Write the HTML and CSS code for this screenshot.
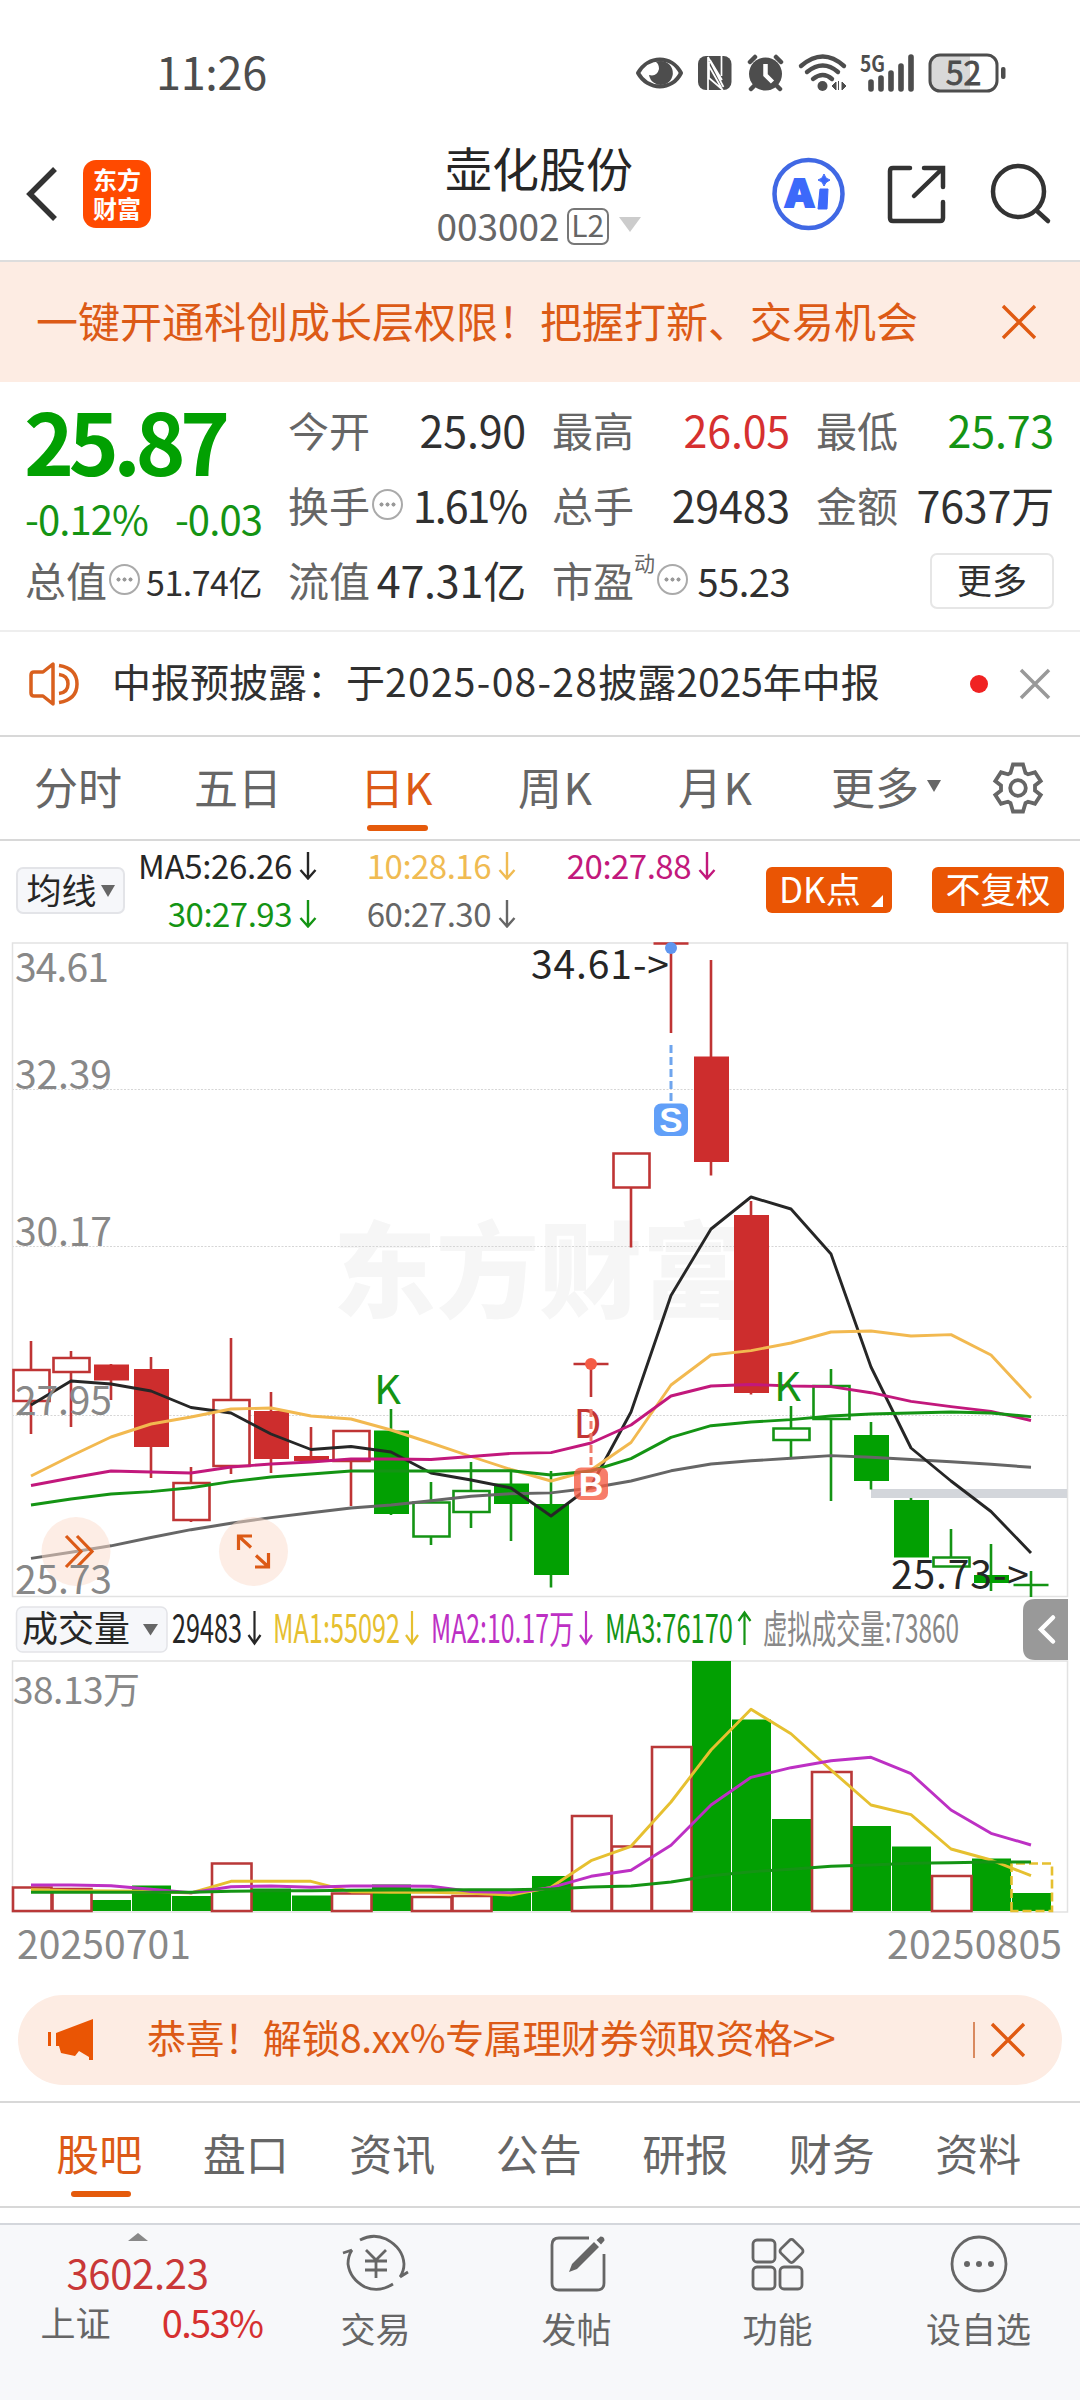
FILE: index.html
```html
<!DOCTYPE html>
<html lang="zh-CN">
<head>
<meta charset="utf-8">
<title>壶化股份 003002</title>
<link rel="stylesheet" href="styles.css">
</head>
<body>
<div class="app">
  <div class="status">
    <span class="time">11:26</span>
    <svg class="status-icons" width="380" height="50" viewBox="630 48 380 50">
      <g fill="none" stroke="#4d4d4d" stroke-width="4">
        <path d="M638 73c10-18 34-18 43 0c-9 18-33 18-43 0z" stroke-linejoin="round"/>
        <path d="M801 66q22-19 43 0M807 72q16-13 31 0M813 79q10-8 19 0" stroke-width="4.4" stroke-linecap="round"/>
        <path d="M750 62l5-5M781 62l-5-5M754 86l-3 3M777 86l3 3" stroke-linecap="round" stroke-width="4.5"/>
        <path d="M871 82v7M881 78v11M891 73v16M901 66v23M911 57v32" stroke-width="5.6" stroke-linecap="round"/>
      </g>
      <path d="M656 62a12 12 0 1 1-7 13q8 2 10-6q0-5-3-7z" fill="#4d4d4d"/>
      <rect x="698" y="56" width="33.500" height="34" rx="8" fill="#4d4d4d"/>
      <path d="M708 57L723.500 87M708 57V90M721.500 56V76M709 62V78L723 90M721.500 88L709 66M722 80L710 60" fill="none" stroke="#fff" stroke-width="1.700"/>
      <circle cx="765.500" cy="74" r="16.500" fill="#4d4d4d"/>
      <path d="M765.500 64v11l7 7" fill="none" stroke="#fff" stroke-width="4.500"/>
      <circle cx="822.500" cy="86" r="5" fill="#4d4d4d"/>
      <path d="M832 86l4-4v8zM838.500 81v9M842 82l4 4l-4 4z" fill="#4d4d4d" stroke="#4d4d4d"/>
      <text x="860" y="72" font-size="22" font-weight="700" fill="#4d4d4d" textLength="25" lengthAdjust="spacingAndGlyphs">5G</text>
      <path d="M939 56h31v34h-31q-8 0-8-8V64q0-8 8-8z" fill="#d8d8d8"/>
      <rect x="930" y="55" width="67" height="36" rx="10" fill="none" stroke="#4d4d4d" stroke-width="3"/>
      <rect x="1001" y="67" width="4.500" height="12" rx="2" fill="#4d4d4d"/>
      <text x="963.500" y="84.500" font-size="32" fill="#4d4d4d" text-anchor="middle" stroke="#4d4d4d" stroke-width=".8">52</text>
    </svg>
  </div>

  <header class="header">
    <div class="head-left">
      <svg width="34" height="56" viewBox="0 0 34 56"><path d="M30 3L5 28l25 25" fill="none" stroke="#333" stroke-width="5.500"/></svg>
      <div class="logo"><span>东方</span><span>财富</span></div>
    </div>
    <div class="head-title">
      <h1>壶化股份</h1>
      <div class="code">003002<span class="l2">L2</span><svg width="24" height="16"><path d="M1 0h22L12 15z" fill="#ccc"/></svg></div>
    </div>
    <svg class="head-icons" width="300" height="80" viewBox="765 154 300 80" fill="none" stroke="#333" stroke-width="4.500">
      <circle cx="808.500" cy="194" r="34" stroke="#4068e4"/>
      <text x="785.500" y="207" font-size="38" font-weight="900" fill="#3c69fa" stroke="#3c69fa" stroke-width="2" textLength="28" lengthAdjust="spacingAndGlyphs">A</text>
      <path d="M820 189l8 0l-1 20h-9z" fill="#3c69fa" stroke="#3c69fa" stroke-width="1"/>
      <path d="M824 174q1 5 6 6q-5 2-6 6q-1-5-6-6q5-1 6-6z" fill="#3c69fa" stroke="#3c69fa" stroke-width="1"/>
      <path d="M910 168h-17q-3 0-3 3v47q0 3 3 3h47q3 0 3-3v-16M924 168h19v19M941 170l-27 26" stroke-linecap="round"/>
      <circle cx="1018.500" cy="191.500" r="25.500"/>
      <path d="M1037 211l11 10" stroke-linecap="round"/>
    </svg>
  </header>

  <div class="promo">
    <span>一键开通科创成长层权限！把握打新、交易机会</span>
    <svg width="36" height="36" viewBox="0 0 36 36"><path d="M2 2l32 32M34 2L2 34" stroke="#e05a12" stroke-width="3.400"/></svg>
  </div>

  <section class="quote">
    <div class="price">
      <strong>25.87</strong>
      <div class="change"><span>-0.12%</span><span>-0.03</span></div>
    </div>
    <div class="cell"><label>今开</label><b>25.90</b></div>
    <div class="cell"><label>最高</label><b class="up">26.05</b></div>
    <div class="cell"><label>最低</label><b class="down">25.73</b></div>
    <div class="cell"><label>换手</label><i class="more-dot"></i><b class="pct">1.61%</b></div>
    <div class="cell"><label>总手</label><b>29483</b></div>
    <div class="cell"><label>金额</label><b>7637万</b></div>
    <div class="cell"><label>总值</label><i class="more-dot"></i><b class="s34">51.74亿</b></div>
    <div class="cell"><label>流值</label><b>47.31亿</b></div>
    <div class="cell"><label>市盈</label><sup>动</sup><i class="more-dot"></i><b class="s37">55.23</b></div>
    <div class="cell end"><button class="more-btn">更多</button></div>
  </section>

  <div class="notice">
    <svg width="52" height="44" viewBox="0 0 52 44" fill="none" stroke="#d9601e" stroke-width="3.500">
      <path d="M24 2v40L14 34H5q-3 0-3-3V13q0-3 3-3h9z" stroke-linejoin="round"/>
      <path d="M30 3.500q18 3 18 18.500t-18 18.500M30 12.500q9 1 9 9.500t-9 9.500"/>
    </svg>
    <span class="notice-text">中报预披露：于<span class="notice-date">2025-08-28</span>披露2025年中报</span>
    <i class="red-dot"></i>
    <svg width="30" height="30" viewBox="0 0 30 30"><path d="M1 1l28 28M29 1L1 29" stroke="#999" stroke-width="3.500"/></svg>
  </div>

  <nav class="periods">
    <span>分时</span><span>五日</span><span class="on">日K</span><span>周K</span><span>月K</span>
    <span class="pmore">更多<svg width="14" height="12"><path d="M0 0h14L7 12z" fill="#666"/></svg></span>
    <svg class="gear" width="56" height="56" viewBox="-28 -28 56 56" fill="none" stroke="#666" stroke-width="3.800">
      <path d="M-5 -23.500H5L7.500 -15L10 -13.700L17 -15.700L22.700 -7L17 -2.500V2.500L22.700 7L17 15.700L10 13.700L7.500 15L5 23.500H-5L-7.500 15L-10 13.700L-17 15.700L-22.700 7L-17 2.500V-2.500L-22.700 -7L-17 -15.700L-10 -13.700L-7.500 -15z"/>
      <circle r="7.800"/>
    </svg>
  </nav>

  <div class="ma-row">
    <div class="pick">均线<svg width="14" height="12"><path d="M0 0h14L7 12z" fill="#666"/></svg></div>
    <div class="ma-grid">
      <span class="ma c5">MA5:26.26<svg class="arr"><use href="#down"/></svg></span>
      <span class="ma c10">10:28.16<svg class="arr"><use href="#down"/></svg></span>
      <span class="ma c20">20:27.88<svg class="arr"><use href="#down"/></svg></span>
      <span class="ma c30">30:27.93<svg class="arr"><use href="#down"/></svg></span>
      <span class="ma c60">60:27.30<svg class="arr"><use href="#down"/></svg></span>
    </div>
    <div class="tag dk">DK点<svg width="12" height="12"><path d="M12 0v12H0z" fill="#fff"/></svg></div>
    <div class="tag fq">不复权</div>
  </div>

  <svg class="kline" width="1080" height="660" viewBox="0 940 1080 660">
    <defs>
      <symbol id="down" viewBox="0 0 18 28"><path d="M9 0v26M1.500 18L9 26.500l7.500-8.500" fill="none" stroke="currentColor" stroke-width="2.400"/></symbol>
    </defs>
    <text class="mark" x="333" y="1310" textLength="412" lengthAdjust="spacingAndGlyphs">东方财富</text>
    <path d="M12 1089.500H1067M12 1246.500H1067M12 1415.500H1067" stroke="#d6d6d6" stroke-width="1" stroke-dasharray="2 1.500"/>
    <path d="M12.500 943V1596.500H1067.500V943z" fill="none" stroke="#e2e2e2" stroke-width="1.500"/>
    <rect x="871" y="1489" width="196" height="9" fill="#d3d6db"/>
    <g class="red">
      <path d="M31 1341V1370M31 1401V1434M71 1351V1358M71 1372V1427M111 1364V1400M151 1357V1478M191 1467V1483M191 1520V1522M231 1338V1400M231 1466V1474M271 1392V1473M311 1427V1461M351 1461V1506M591 1364V1397M573.500 1364H608.500M631 1187V1247.500M671 943V1033M653.500 943.500H688.500M711 960V1175.500M751 1201V1394.500"/>
      <path class="hollow" d="M13.500 1370h36v31h-36zM53.500 1358h36v14h-36zM173.500 1483h36v37h-36zM213.500 1400h36v66h-36zM333.500 1431h36v30h-36zM613.500 1153.500h36v34h-36z"/>
      <path class="solid" d="M94 1364.500h35v16h-35zM134 1369h35v78h-35zM254 1411h35v48h-35zM294 1456h35v5h-35zM694 1056.500h35v105.500h-35zM734 1215h35v178h-35z"/>
    </g>
    <g class="green">
      <path d="M391 1409V1515M431 1482V1502M431 1536V1545M471 1462V1491M471 1512V1528M511 1471V1541M551 1471V1587.500M791 1406V1429M791 1440V1457M831 1369V1386M831 1419V1501M871 1422V1489.500M911 1498V1557M951 1529V1558M991 1544V1591M1031 1571V1597M1013.500 1585H1048.500"/>
      <path class="hollow" d="M413.500 1502.500h36v34h-36zM453.500 1491h36v21h-36zM773.500 1428.500h36v11.500h-36zM813.500 1386h36v33h-36zM933.500 1557.500h36v9h-36z"/>
      <path class="solid" d="M374 1430.500h35v83.500h-35zM494 1483.500h35v20.500h-35zM534 1504h35v71h-35zM854 1435h35v46h-35zM894 1500h35v57.500h-35zM974 1575h35v8h-35z"/>
    </g>
    <circle cx="671" cy="948" r="6" fill="#5f96f0"/>
    <path d="M671 1045V1102" stroke="#6fa5ee" stroke-width="3" stroke-dasharray="8 4"/>
    <rect x="654" y="1103.500" width="34" height="32.500" rx="7" fill="#619ff8"/>
    <text x="671" y="1132" font-size="35" font-weight="700" fill="#fff" text-anchor="middle" class="lat">S</text>
    <text class="d-mark" x="573.500" y="1437.500" textLength="28" lengthAdjust="spacingAndGlyphs">D</text>
    <path d="M591 1409V1466" stroke="#f07a68" stroke-width="3" stroke-dasharray="8 4"/>
    <circle cx="591" cy="1364" r="6" fill="#f55c45"/>
    <g class="line">
      <path stroke="#666" d="M31 1558.400L71 1552.300L111 1545.800L151 1537.500L191 1529.700L231 1523.200L271 1517.600L311 1512.800L351 1508L391 1505L431 1500.700L471 1496.300L511 1493.700L551 1492.900L591 1488L631 1481L671 1470.800L711 1464L751 1460.800L791 1458.200L831 1455.600L871 1457.300L911 1459.500L951 1461.700L991 1464.300L1031 1467.300"/>
      <path stroke="#262626" d="M31 1405L71 1381L111 1384L151 1391L191 1407.500L231 1413L271 1434L311 1449.500L351 1446.500L391 1452L431 1473L471 1480L511 1488L551 1516L591 1486L631 1412L671 1295.500L711 1229L751 1197L791 1209L831 1254L871 1367L911 1448L951 1481L991 1511.500L1031 1553"/>
      <path stroke="#f2b950" d="M31 1476L71 1456L111 1437L151 1424L191 1417L231 1409L271 1408L311 1416L351 1419L391 1430L431 1443L471 1456.500L511 1469.500L551 1481L591 1470L631 1442.500L671 1385L711 1355L751 1350.600L791 1343L831 1332L871 1331L911 1336L951 1334.600L991 1355L1031 1398"/>
      <path stroke="#c2187c" d="M31 1485.500L71 1478L111 1471L151 1472L191 1473L231 1467L271 1464L311 1462L351 1459L391 1459L431 1459.500L471 1456.500L511 1453.400L551 1452.600L591 1443L631 1425L671 1396L711 1386L751 1384.500L791 1386L831 1386.600L871 1392.700L911 1401.400L951 1406.600L991 1411.400L1031 1420.500"/>
      <path stroke="#149414" d="M31 1505L71 1499L111 1494L151 1491.600L191 1487.700L231 1481.600L271 1477L311 1474L351 1471L391 1471L431 1471L471 1470.800L511 1470.800L551 1475L591 1471L631 1458.600L671 1437.400L711 1425.700L751 1422L791 1419.600L831 1416L871 1414L911 1413L951 1412L991 1413L1031 1416.600"/>
    </g>
    <rect x="574" y="1467.500" width="34" height="32.500" rx="7" fill="#f55c45" fill-opacity=".8"/>
    <text x="591" y="1496" font-size="34" font-weight="700" fill="#fff" text-anchor="middle" class="lat">B</text>
    <g fill="#fbdccb" fill-opacity=".5"><circle cx="76" cy="1551.500" r="34.500"/><circle cx="253.500" cy="1551.500" r="34.500"/></g>
    <g fill="none" stroke="#dc5a16" stroke-width="3.200">
      <path d="M66 1536l15 15.500l-15 15.500M77 1536l15 15.500l-15 15.500"/>
      <path d="M238.500 1550v-14h13.500M239 1536.500l12 11M268.500 1553v14h-13.500M268 1566.500l-12-11"/>
    </g>
    <g class="axis">
      <text x="15" y="981.500" textLength="94">34.61</text>
      <text x="15" y="1089" textLength="97">32.39</text>
      <text x="15" y="1246" textLength="97">30.17</text>
      <text x="15" y="1414.500" textLength="97">27.95</text>
      <text x="15" y="1594" textLength="97">25.73</text>
    </g>
    <text class="k-mark" x="374" y="1403.500" textLength="27" lengthAdjust="spacingAndGlyphs">K</text>
    <text class="k-mark" x="774" y="1400.500" textLength="27" lengthAdjust="spacingAndGlyphs">K</text>
    <text class="ext" x="531" y="979" textLength="138">34.61-&gt;</text>
    <text class="ext" x="891" y="1589" textLength="138">25.73-&gt;</text>
  </svg>

  <svg class="vol-head" width="1080" height="60" viewBox="0 1600 1080 60">
    <rect x="16.500" y="1607" width="150.500" height="45" rx="6" fill="#f6f7fa" stroke="#e3e4e8" stroke-width="1.500"/>
    <text x="22" y="1641.500" font-size="36" fill="#262626" textLength="108">成交量</text>
    <path d="M143 1624h15l-7.500 11.500z" fill="#666"/>
    <g class="cond">
      <text x="172" y="1643" fill="#262626" textLength="70" lengthAdjust="spacingAndGlyphs">29483</text>
      <text x="273" y="1643" fill="#e6c030" textLength="127" lengthAdjust="spacingAndGlyphs">MA1:55092</text>
      <text x="431" y="1643" fill="#bd30c4" textLength="143" lengthAdjust="spacingAndGlyphs">MA2:10.17万</text>
      <text x="605" y="1643" fill="#149414" textLength="128" lengthAdjust="spacingAndGlyphs">MA3:76170</text>
      <text x="763" y="1643" fill="#888" textLength="196" lengthAdjust="spacingAndGlyphs">虚拟成交量:73860</text>
    </g>
    <g fill="none" stroke-width="2.200">
      <path stroke="#262626" d="M254.500 1611v32M248.500 1635l6 8.500l6-8.500"/>
      <path stroke="#e6c030" d="M412 1611v32M406 1635l6 8.500l6-8.500"/>
      <path stroke="#bd30c4" d="M586 1611v32M580 1635l6 8.500l6-8.500"/>
      <path stroke="#149414" d="M744.500 1645v-32M738.500 1621l6-8.500l6 8.500"/>
    </g>
    <path d="M1068 1599v61h-33q-12 0-12-12v-37q0-12 12-12z" fill="#999"/>
    <path d="M1053 1617.500l-12 12l12 12" fill="none" stroke="#fff" stroke-width="4.500" stroke-linecap="round"/>
  </svg>

  <svg class="volume" width="1080" height="330" viewBox="0 1660 1080 330">
    <path d="M12.500 1661V1912H1067.500V1661z" fill="none" stroke="#e2e2e2" stroke-width="1.500"/>
    <text class="axis38" x="13" y="1704" textLength="127">38.13万</text>
    <path fill="#02a002" d="M92 1900h39v11h-39zM132 1885.500h39v25.500h-39zM172 1896h39v15h-39zM252 1888.500h39v22.500h-39zM292 1895.500h39v15.500h-39zM372 1884.500h39v26.500h-39zM492 1893h39v18h-39zM532 1876h39v35h-39zM692 1661h39v250h-39zM732 1719.500h39v191.500h-39zM772 1819h39v92h-39zM852 1826h39v85h-39zM892 1846.500h39v64.500h-39zM972 1858.500h39v52.500h-39zM1012 1893h39v18h-39z"/>
    <path fill="none" stroke="#b93838" stroke-width="2.600" d="M13 1887.500h38.500v23.500h-38.500zM52.500 1889h39v22h-39zM212 1863.500h39.500v47.500h-39.500zM332 1893.500h39.500v17.500h-39.500zM412 1897h39.500v14h-39.500zM452.500 1896h39v15h-39zM572 1816h39.500v95h-39.500zM612 1846.500h39.500v64.500h-39.500zM652 1747h39.500v164h-39.500zM812 1772h39.500v139h-39.500zM932 1876h39.500v35h-39.500z"/>
    <path fill="none" stroke="#e6c030" stroke-width="2.600" stroke-dasharray="9 4" d="M1011.500 1911V1863.500H1052V1911z"/>
    <g class="line">
      <path stroke="#e6c030" d="M31 1889.700L71 1890.700L111 1891L151 1891.300L191 1893L231 1881.300L271 1881.300L311 1881.300L351 1891.700L391 1892.300L431 1892.300L471 1893.300L511 1895L551 1887.300L591 1860.700L631 1846.300L671 1802L711 1750L751 1709.300L791 1733.700L831 1770L871 1805L911 1814.700L951 1849L991 1860L1031 1875.700"/>
      <path stroke="#bd30c4" d="M31 1885L71 1885L111 1885.700L151 1889.300L191 1892.700L231 1886.700L271 1886L311 1887.300L351 1886L391 1886L431 1886.300L471 1891.500L511 1892.700L551 1887.700L591 1876.300L631 1870.300L671 1845.300L711 1805L751 1777.300L791 1767.700L831 1760.700L871 1757.300L911 1773.700L951 1810L991 1833.300L1031 1845"/>
      <path stroke="#149414" d="M31 1892.300H191L231 1891.300L271 1890.700H311L351 1890.300L391 1890H431L471 1889.700H511L551 1889L591 1887L631 1886L671 1882L711 1875.700L751 1871.700L791 1869.300L831 1866.300L871 1865L911 1863.300L951 1862.700L991 1862H1031"/>
    </g>
    <text class="date" x="17" y="1959" textLength="174">20250701</text>
    <text class="date" x="887" y="1959" textLength="175">20250805</text>
  </svg>

  <div class="coupon">
    <svg width="50" height="44" viewBox="0 0 50 44" fill="#ea5504"><path d="M46 1v41h-4v-3L32 33l-4 5l-14-3l-2-7H9V15zM1 14h3v14H1z"/></svg>
    <span class="coupon-text">恭喜！解锁8.xx%专属理财券领取资格&gt;&gt;</span>
    <i class="bar"></i>
    <svg width="36" height="36" viewBox="0 0 36 36"><path d="M2 2l32 32M34 2L2 34" stroke="#e05a12" stroke-width="3.400"/></svg>
  </div>

  <nav class="sections">
    <span class="on">股吧</span><span>盘口</span><span>资讯</span><span>公告</span><span>研报</span><span>财务</span><span>资料</span>
  </nav>

  <footer class="dock">
    <div class="index">
      <svg width="20" height="8"><path d="M10 0l10 8H0z" fill="#888"/></svg>
      <b>3602.23</b>
      <div class="index-row"><span>上证</span><em>0.53%</em></div>
    </div>
    <div class="item">
      <svg width="66" height="62" viewBox="0 0 66 62" fill="none" stroke="#666" stroke-width="2.800">
        <path d="M17 8Q30 1 43 7Q60 16 61 32Q61 39 57 45M57 45l8-5M50 52Q36 61 22 55Q7 47 5 32Q5 24 9 18M0 21l9-3"/>
        <path d="M23 18l10 10l10-10M33 28v18M22 29h22M22 38h22"/>
      </svg><span>交易</span>
    </div>
    <div class="item">
      <svg width="66" height="62" viewBox="0 0 66 62" fill="none" stroke="#666" stroke-width="2.800">
        <path d="M45 6H15q-7 0-7 7v38q0 7 7 7h38q7 0 7-7V22"/>
        <path d="M25 40l3-8l22-22l5 5l-22 22zM52.500 8l4-3.500q4 0 4 4l-3.500 4z" fill="#666" stroke="none"/>
      </svg><span>发帖</span>
    </div>
    <div class="item">
      <svg width="66" height="62" viewBox="0 0 66 62" fill="none" stroke="#666" stroke-width="2.800">
        <rect x="8" y="8" width="22" height="22" rx="4"/><rect x="8" y="35" width="22" height="22" rx="4"/><rect x="35" y="35" width="22" height="22" rx="4"/>
        <rect x="37.500" y="10" width="18" height="18" rx="3" transform="rotate(45 46.500 19)"/>
      </svg><span>功能</span>
    </div>
    <div class="item">
      <svg width="66" height="62" viewBox="0 0 66 62"><circle cx="33" cy="32" r="27" fill="none" stroke="#666" stroke-width="2.800"/><g fill="#666"><circle cx="21" cy="32" r="3"/><circle cx="33" cy="32" r="3"/><circle cx="45" cy="32" r="3"/></g></svg><span>设自选</span>
    </div>
  </footer>
</div>
</body>
</html>
```
FILE: styles.css
```css
* { box-sizing: border-box; }
body {
  margin: 0;
  width: 1080px;
  background: #fff;
  color: #262626;
  font-family: "Noto Sans CJK SC", "Noto Sans", sans-serif;
  line-height: 1;
}
svg { display: block; flex: none; overflow: visible; }
.app { width: 1080px; height: 2400px; display: flex; flex-direction: column; overflow: hidden; background: #fff; }
.app > * { flex: none; }
span, b, label, em, strong { white-space: nowrap; }

.status { height: 146px; display: flex; justify-content: space-between; align-items: flex-start; padding: 48px 70px 0 156px; }
.time { font-size: 45px; line-height: 46px; color: #4d4d4d; letter-spacing: -.3px; }

.header { height: 116px; display: flex; justify-content: space-between; padding: 0 15px 0 25px; border-bottom: 2px solid #ddd; }
.head-left { display: flex; align-items: center; gap: 24px; height: 96px; }
.logo { width: 68px; height: 68px; border-radius: 13px; background: #ff4a00; color: #fff; display: flex; flex-direction: column; align-items: center; justify-content: center; font-size: 24px; font-weight: 700; line-height: 29px; padding-bottom: 3px; }
.head-title { display: flex; flex-direction: column; align-items: center; margin-left: 162px; }
h1 { margin: 0; font-size: 47px; font-weight: 400; line-height: 42px; }
.code { display: flex; align-items: center; font-size: 37px; line-height: 38px; color: #666; margin-top: 17px; }
.l2 { border: 2px solid #777; border-radius: 7px; font-size: 30px; line-height: 28px; height: 37px; width: 42px; text-align: center; margin: 3px 9px 0 7px; }
.head-icons { margin-top: 8px; }

.promo { height: 120px; background: #fdece3; display: flex; align-items: center; justify-content: space-between; padding: 0 43px 0 36px; color: #dc5a16; font-size: 42px; }
.promo span { margin-top: -4px; }

.quote { height: 248px; padding: 10px 24px 0 25px; display: grid; grid-template-columns: 237px repeat(3, 238px); grid-template-rows: repeat(3, 75px); column-gap: 26px; }
.price { grid-row: 1 / 3; color: #02a002; display: flex; flex-direction: column; }
.price strong { font-size: 85px; font-weight: 700; line-height: 90px; letter-spacing: -5.500px; margin: 2px 0 0 -1px; }
.change { display: flex; justify-content: space-between; font-size: 40px; line-height: 44px; margin-top: 12px; color: #149414; letter-spacing: -.9px; }
.cell { display: flex; align-items: center; font-size: 43px; }
.cell label { font-size: 41px; color: #666; }
.cell b { margin-left: auto; font-weight: 400; color: #303030; letter-spacing: -.2px; }
.cell .up { color: #d63030; }
.cell .down { color: #149414; }
.cell .pct { letter-spacing: -2px; }
.cell .s34 { font-size: 34px; margin-top: 4px; letter-spacing: -.5px; }
.cell .s37 { font-size: 38px; margin-top: 3px; letter-spacing: -.5px; }
.cell sup { font-size: 21px; color: #666; align-self: flex-start; margin-top: 10px; }
.cell.end { justify-content: flex-end; }
.more-dot { width: 31px; height: 31px; margin-left: 2px; border: 2.500px solid #aaa; border-radius: 50%; background: radial-gradient(circle, #999 1.800px, transparent 2.300px) 50% 50% / 7px 100% no-repeat, radial-gradient(circle, #999 1.800px, transparent 2.300px) 20% 50% / 7px 100% no-repeat, radial-gradient(circle, #999 1.800px, transparent 2.300px) 80% 50% / 7px 100% no-repeat; }
.more-btn { width: 124px; height: 56px; border: 2px solid #e6e6e6; border-radius: 7px; background: #fff; font: 35px/44px "Noto Sans CJK SC", sans-serif; color: #303030; padding: 0 0 4px; margin-top: 2px; }

.notice { height: 107px; border-top: 2px solid #eee; border-bottom: 2px solid #d8d8d8; display: flex; align-items: center; padding: 0 30px 0 29px; }
.notice-text { font-size: 39px; color: #303030; margin: -6px 0 0 31px; }
.notice-date { letter-spacing: 1.300px; }
.red-dot { width: 18px; height: 18px; border-radius: 50%; background: #f02222; margin: 0 32px 0 auto; }

.periods { height: 104px; border-bottom: 2px solid #d8d8d8; display: grid; grid-template-columns: 160px 161px 163px 158px 162px 159px 1fr; padding-bottom: 4px; color: #666; font-size: 44px; align-items: center; justify-items: start; padding-left: 34px; }
.periods span { position: relative; line-height: 60px; }
.periods .on { color: #dc5a16; margin-left: 5px; }
.periods .on::after { content: ""; position: absolute; left: 7px; bottom: -15px; width: 61px; height: 6px; border-radius: 3px; background: #e55a0b; }
.periods span:nth-child(4) { letter-spacing: 1.500px; }
.periods span:nth-child(5) { letter-spacing: 1.500px; margin-left: 2px; }
.pmore { display: flex; align-items: center; gap: 8px; margin-left: -7px; }
.gear { margin: 3px 0 0 -7px; }

.ma-row { height: 99px; display: flex; align-items: flex-start; padding-left: 16px; }
.pick { width: 109px; height: 47px; margin-top: 26px; border: 2px solid #e3e4e8; border-radius: 7px; background: #f6f7fa; display: flex; align-items: center; justify-content: center; gap: 4px; font-size: 35px; line-height: 38px; padding-bottom: 4px; }
.pick svg { margin-top: 4px; }
.ma-grid { width: 593px; height: 99px; display: grid; grid-template-columns: 192px 199px 200px; grid-template-rows: 48px 48px; margin-right: 48px; font-size: 33px; letter-spacing: -.5px; }
.ma { display: flex; align-items: center; justify-content: flex-end; gap: 7px; }
.arr { width: 18px; height: 28px; margin-top: 2px; }
.c5 { color: #262626; letter-spacing: -.3px; }
.c10 { color: #f0bb52; }
.c20 { color: #c2187c; }
.c30 { color: #149414; }
.c60 { color: #666; }
.tag { height: 46px; margin-top: 26px; border-radius: 6px; background: #ea5504; color: #fff; font-size: 35px; line-height: 42px; display: flex; }
.dk { width: 126px; padding-left: 13px; align-items: flex-start; }
.dk svg { margin: 28px 0 0 10px; }
.fq { width: 132px; margin-left: 40px; justify-content: center; }

.mark { font-size: 104px; font-weight: 900; fill: #f6f6f6; }
.red path, .green path { fill: none; stroke-width: 2.600; }
.red path { stroke: #bf3434; }
.green path { stroke: #149414; }
.red .hollow, .green .hollow { fill: #fff; }
.red .solid { fill: #cd2d2d; stroke: none; }
.green .solid { fill: #02a002; stroke: none; }
.line path { fill: none; stroke-width: 2.900; stroke-linejoin: round; }
.lat { font-family: "Liberation Sans", Arial, sans-serif; }
.axis text { font-size: 39px; fill: #888; }
.axis38 { font-size: 37px; fill: #888; }
.date { font-size: 39px; fill: #888; }
.k-mark { font-size: 39px; fill: #149414; }
.d-mark { font-size: 39px; fill: #c23535; }
.ext { font-size: 39px; fill: #262626; }
.cond text { font-size: 39px; }

.coupon { margin: 5px 18px 0; height: 90px; border-radius: 45px; background: #fdece3; display: flex; align-items: center; padding: 0 36px 0 29px; color: #dc5a16; }
.coupon-text { font-size: 39px; margin: -7px auto 0 50px; letter-spacing: -.4px; }
.bar { width: 2px; height: 36px; background: #d98a60; margin-right: 15px; }

.sections { height: 107px; margin-top: 16px; border-top: 2px solid #d8d8d8; border-bottom: 2px solid #d8d8d8; display: grid; grid-template-columns: repeat(7, 146.500px); padding: 0 26px 5px; align-items: center; justify-items: center; color: #666; font-size: 43px; }
.sections span { position: relative; line-height: 60px; }
.sections .on { color: #dc5a16; }
.sections .on::after { content: ""; position: absolute; left: 15px; bottom: -15px; width: 60px; height: 6px; border-radius: 3px; background: #e55a0b; }

.dock { height: 177px; margin-top: 15px; border-top: 2px solid #d4d7dc; background: #f7f8fa; display: grid; grid-template-columns: 275px repeat(4, 201px); }
.index { display: flex; flex-direction: column; align-items: center; padding-top: 8px; color: #c93838; }
.index b { font-size: 40px; font-weight: 400; line-height: 44px; margin-top: 9px; letter-spacing: -.3px; }
.index-row { display: flex; justify-content: space-between; width: 222px; margin: 7px 0 0 28px; }
.index-row span { font-size: 35px; line-height: 42px; color: #666; }
.index-row em { font-style: normal; font-size: 38px; line-height: 42px; color: #d63030; letter-spacing: -1.600px; }
.item { display: flex; flex-direction: column; align-items: center; padding-top: 7px; color: #666; }
.item span { font-size: 35px; line-height: 44px; margin-top: 12px; }
```
